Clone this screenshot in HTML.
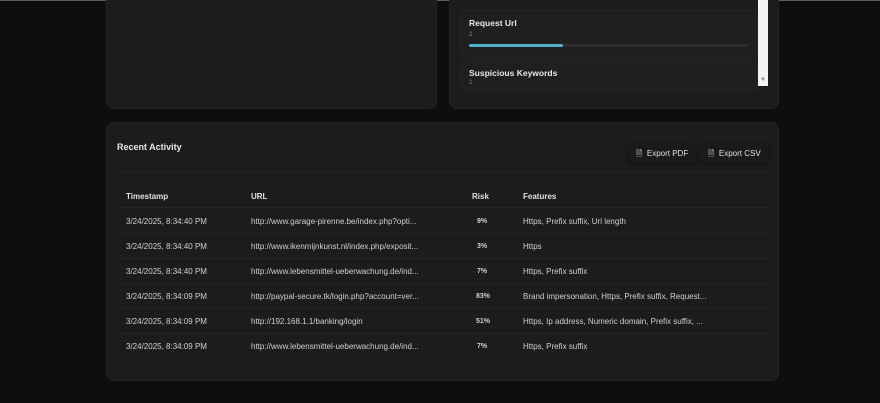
<!DOCTYPE html>
<html><head><style>
*{margin:0;padding:0;box-sizing:border-box}
body{width:880px;height:403px;background:#0e0e0e;font-family:"Liberation Sans",sans-serif;color:#ddd;position:relative;overflow:hidden}
.card{position:absolute;background:#1c1c1c;border-radius:8px;border:1px solid #232323}
.t{position:absolute;white-space:nowrap}
.row{position:absolute;left:117px;width:651px;height:1px;background:#262626}
.cell{position:absolute;font-size:8px;color:#d0d0d0;white-space:nowrap}
.risk{font-weight:bold;font-size:7px}
.btn{position:absolute;top:143px;height:20px;background:#1a1a1a;border-radius:5px;font-size:8px;color:#e0e0e0;padding:5px 8px;box-shadow:0 1px 3px #111}
</style></head><body>
<div style="position:absolute;left:0;top:0;width:880px;height:1px;background:#6a5a5f"></div>
<div class="card" style="left:106px;top:-8px;width:331px;height:117px"></div>
<div class="card" style="left:449px;top:-8px;width:330px;height:117px"></div>
<div style="position:absolute;left:460px;top:10px;width:298px;height:50px;background:#1f1f1f;border:1px solid #242424;border-radius:5px"></div>
<div class="t" style="left:469px;top:18px;font-size:8.5px;font-weight:bold;color:#e8e8e8">Request Url</div>
<div class="t" style="left:469px;top:32px;font-size:6px;color:#888">2</div>
<div style="position:absolute;left:469px;top:44px;width:280px;height:3px;background:#2c2c2c;border-radius:2px"></div>
<div style="position:absolute;left:469px;top:44px;width:94px;height:3px;background:#4fb3d0;border-radius:2px"></div>
<div style="position:absolute;left:460px;top:61px;width:298px;height:30px;background:#1f1f1f;border:1px solid #242424;border-radius:5px"></div>
<div class="t" style="left:469px;top:68px;font-size:8.5px;font-weight:bold;color:#e8e8e8">Suspicious Keywords</div>
<div class="t" style="left:469px;top:80px;font-size:6px;color:#777">2</div>
<div style="position:absolute;left:758px;top:0;width:10px;height:86px;background:#f4f4f4"></div>
<div class="t" style="left:760px;top:77px;font-size:6px;color:#888">▼</div>
<div class="card" style="left:106px;top:122px;width:673px;height:259px"></div>
<div class="t" style="left:117px;top:142px;font-size:9px;font-weight:bold;color:#e8e8e8">Recent Activity</div>
<div class="btn" style="left:628px">🗎&nbsp; Export PDF</div>
<div class="btn" style="left:700px">🗎&nbsp; Export CSV</div>
<div class="row" style="top:171px"></div>
<div class="cell" style="left:126px;top:192px;font-weight:bold;color:#e0e0e0">Timestamp</div>
<div class="cell" style="left:251px;top:192px;font-weight:bold;color:#e0e0e0">URL</div>
<div class="cell" style="left:472px;top:192px;font-weight:bold;color:#e0e0e0">Risk</div>
<div class="cell" style="left:523px;top:192px;font-weight:bold;color:#e0e0e0">Features</div>
<div class="row" style="top:207px"></div>
<div class="cell" style="left:126px;top:217px">3/24/2025, 8:34:40 PM</div><div class="cell" style="left:251px;top:217px">http://www.garage-pirenne.be/index.php?opti...</div><div class="cell risk" style="left:477px;top:218px">9%</div><div class="cell" style="left:523px;top:217px">Https, Prefix suffix, Url length</div>
<div class="row" style="top:233px"></div>
<div class="cell" style="left:126px;top:242px">3/24/2025, 8:34:40 PM</div><div class="cell" style="left:251px;top:242px">http://www.ikenmijnkunst.nl/index.php/exposit...</div><div class="cell risk" style="left:477px;top:243px">3%</div><div class="cell" style="left:523px;top:242px">Https</div>
<div class="row" style="top:258px"></div>
<div class="cell" style="left:126px;top:267px">3/24/2025, 8:34:40 PM</div><div class="cell" style="left:251px;top:267px">http://www.lebensmittel-ueberwachung.de/ind...</div><div class="cell risk" style="left:477px;top:268px">7%</div><div class="cell" style="left:523px;top:267px">Https, Prefix suffix</div>
<div class="row" style="top:283px"></div>
<div class="cell" style="left:126px;top:292px">3/24/2025, 8:34:09 PM</div><div class="cell" style="left:251px;top:292px">http://paypal-secure.tk/login.php?account=ver...</div><div class="cell risk" style="left:476px;top:293px">83%</div><div class="cell" style="left:523px;top:292px">Brand impersonation, Https, Prefix suffix, Request...</div>
<div class="row" style="top:308px"></div>
<div class="cell" style="left:126px;top:317px">3/24/2025, 8:34:09 PM</div><div class="cell" style="left:251px;top:317px">http://192.168.1.1/banking/login</div><div class="cell risk" style="left:476px;top:318px">51%</div><div class="cell" style="left:523px;top:317px">Https, Ip address, Numeric domain, Prefix suffix, ...</div>
<div class="row" style="top:333px"></div>
<div class="cell" style="left:126px;top:342px">3/24/2025, 8:34:09 PM</div><div class="cell" style="left:251px;top:342px">http://www.lebensmittel-ueberwachung.de/ind...</div><div class="cell risk" style="left:477px;top:343px">7%</div><div class="cell" style="left:523px;top:342px">Https, Prefix suffix</div>
</body></html>
